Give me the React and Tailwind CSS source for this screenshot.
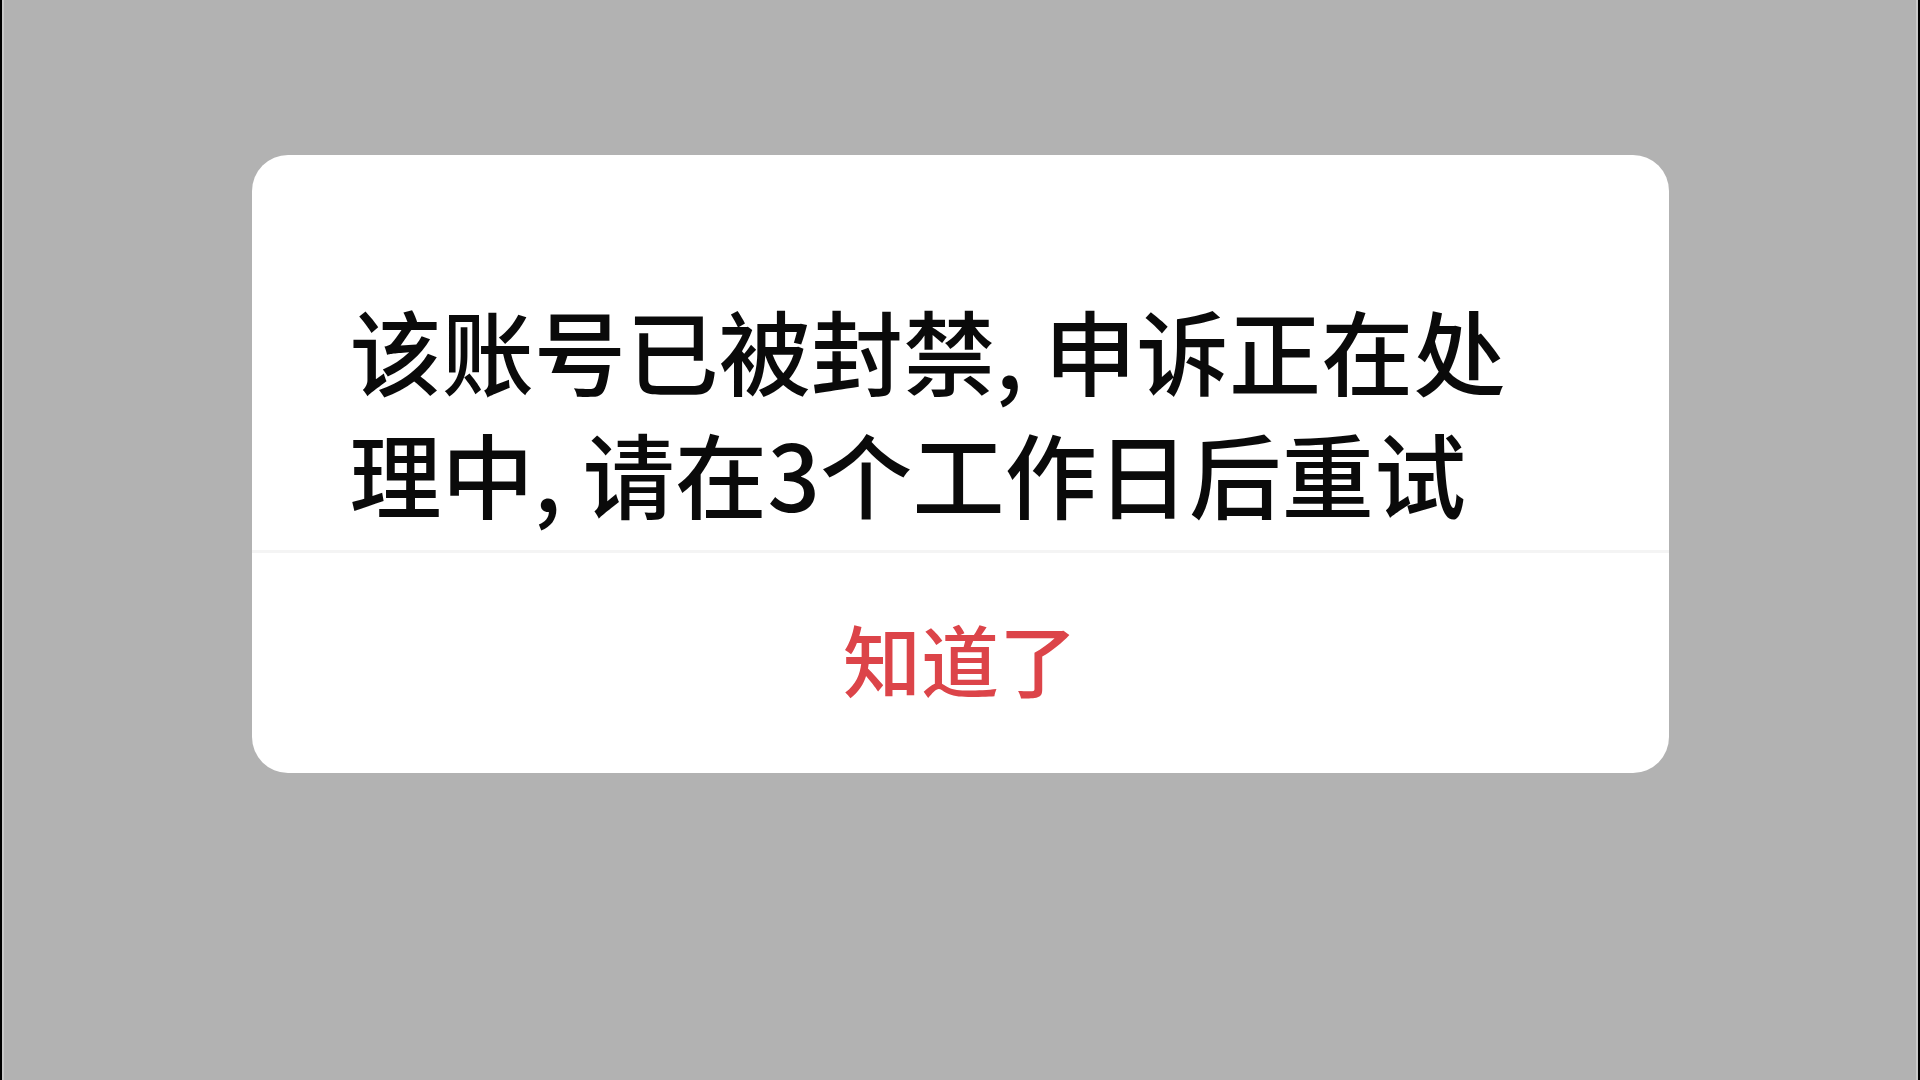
export default function App() {
  return (
    <div className="flex h-screen w-full bg-[#b2b2b2]" style={{ fontFamily: '"Noto Sans CJK SC", "Noto Sans", sans-serif' }}>
      <div className="w-[2px] bg-black" />
      <div className="w-[2px] bg-[#c8c8c8]" />
      <div className="flex flex-1 flex-col items-center pt-[155px]">
        <div className="w-[1417px] overflow-hidden rounded-[36px] bg-white">
          <div className="px-[98px] pt-[132px] pb-[17px]">
            <p className="text-[92px] font-medium leading-[123px] tracking-[0.3px] text-[#0a0a0a]">
              该账号已被封禁, 申诉正在处理中, 请在3个工作日后重试
            </p>
          </div>
          <div className="h-[3px] bg-[#f4f4f4]" />
          <div className="flex h-[220px] items-center justify-center pb-[10px]">
            <span className="text-[78px] font-medium leading-none text-[#dc4449]">知道了</span>
          </div>
        </div>
      </div>
      <div className="w-[2px] bg-[#c8c8c8]" />
      <div className="w-[2px] bg-black" />
    </div>
  );
}
